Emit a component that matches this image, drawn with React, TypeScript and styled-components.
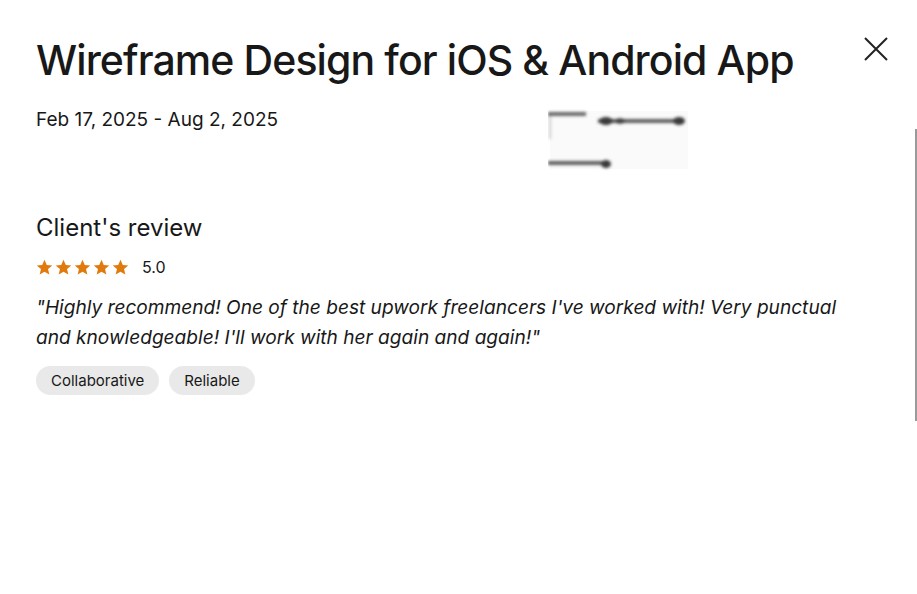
import styled, { createGlobalStyle } from 'styled-components'

const GlobalStyle = createGlobalStyle`
  html, body {
    margin: 0;
    padding: 0;
    background: #fff;
  }
  body {
    font-family: Inter, "Liberation Sans", sans-serif;
    color: #181818;
  }
`

const Modal = styled.main`
  position: relative;
  width: 917px;
  height: 594px;
  box-sizing: border-box;
  padding: 30px 0 0 36px;
  overflow: hidden;
`

const Header = styled.header`
  display: flex;
  align-items: flex-start;
  justify-content: space-between;
  padding-right: 29px;
`

const Title = styled.h1`
  margin: 0;
  font-size: 41px;
  font-weight: 500;
  letter-spacing: -0.9px;
  line-height: 60px;
`

const CloseButton = styled.button`
  border: 0;
  background: none;
  padding: 0;
  margin-top: 7px;
  width: 24px;
  height: 24px;
  cursor: pointer;
  color: #222;
`

const MetaRow = styled.div`
  display: flex;
  align-items: flex-start;
  margin-top: 17px;
`

const Dates = styled.p`
  margin: 0;
  width: 512px;
  font-size: 19px;
  line-height: 26px;
`

const Thumb = styled.div`
  width: 142px;
  height: 66px;
`

const Section = styled.section`
  margin-top: 40px;
`

const SectionTitle = styled.h2`
  margin: 0;
  font-size: 24px;
  font-weight: 400;
  line-height: 30px;
`

const RatingRow = styled.div`
  display: flex;
  align-items: center;
  gap: 13px;
  margin-top: 14px;
`

const Stars = styled.div`
  display: flex;
  gap: 2px;
`

const Score = styled.span`
  font-size: 16px;
`

const Quote = styled.p`
  margin: 15px 0 0;
  max-width: 820px;
  font-size: 19.1px;
  font-style: italic;
  line-height: 30px;
`

const Tags = styled.div`
  display: flex;
  gap: 10px;
  margin-top: 14px;
`

const Tag = styled.span`
  display: inline-flex;
  align-items: center;
  height: 29px;
  padding: 0 15px;
  border-radius: 15px;
  background: #e9e9e9;
  font-size: 15px;
`

const ScrollTrack = styled.div`
  position: absolute;
  right: 0;
  top: 129px;
  width: 2px;
  height: 292px;
  background: #9a9a9a;
`

const Star = () => (
  <svg width="17" height="17" viewBox="0 0 24 24">
    <path
      fill="#e07a0c"
      d="M12 1l3.2 7.3 7.8.7-6 5.2 1.8 7.8L12 17.9 5.2 22l1.8-7.8-6-5.2 7.8-.7z"
    />
  </svg>
)

const BlurredPreview = () => (
  <svg width="142" height="66" viewBox="0 0 142 66">
    <defs>
      <filter id="blur" x="-10%" y="-50%" width="120%" height="200%">
        <feGaussianBlur stdDeviation="1.4" />
      </filter>
    </defs>
    <rect x="2" y="4" width="138" height="58" fill="#fafafa" />
    <g filter="url(#blur)" fill="#3a3a3a">
      <rect x="0" y="5" width="38" height="4" opacity="0.75" />
      <rect x="50" y="12" width="86" height="4" opacity="0.8" />
      <ellipse cx="58" cy="14" rx="7" ry="4" />
      <ellipse cx="72" cy="14" rx="5" ry="3" opacity="0.8" />
      <ellipse cx="131" cy="14" rx="6" ry="4" />
      <rect x="0" y="54" width="60" height="4" opacity="0.8" />
      <ellipse cx="58" cy="57" rx="5" ry="4" />
      <rect x="1" y="8" width="1.5" height="24" opacity="0.35" />
    </g>
  </svg>
)

const App = () => (
  <>
    <GlobalStyle />
    <Modal>
      <Header>
        <Title>Wireframe Design for iOS &amp; Android App</Title>
        <CloseButton aria-label="Close">
          <svg width="24" height="24" viewBox="0 0 24 24" fill="none" stroke="currentColor" strokeWidth="2">
            <path d="M1 1l22 22M23 1L1 23" />
          </svg>
        </CloseButton>
      </Header>
      <MetaRow>
        <Dates>Feb 17, 2025 - Aug 2, 2025</Dates>
        <Thumb>
          <BlurredPreview />
        </Thumb>
      </MetaRow>
      <Section>
        <SectionTitle>Client's review</SectionTitle>
        <RatingRow>
          <Stars>
            {[0, 1, 2, 3, 4].map(i => <Star key={i} />)}
          </Stars>
          <Score>5.0</Score>
        </RatingRow>
        <Quote>
          "Highly recommend! One of the best upwork freelancers I've worked with! Very punctual and
          knowledgeable! I'll work with her again and again!"
        </Quote>
        <Tags>
          <Tag>Collaborative</Tag>
          <Tag>Reliable</Tag>
        </Tags>
      </Section>
      <ScrollTrack />
    </Modal>
  </>
)

export default App
